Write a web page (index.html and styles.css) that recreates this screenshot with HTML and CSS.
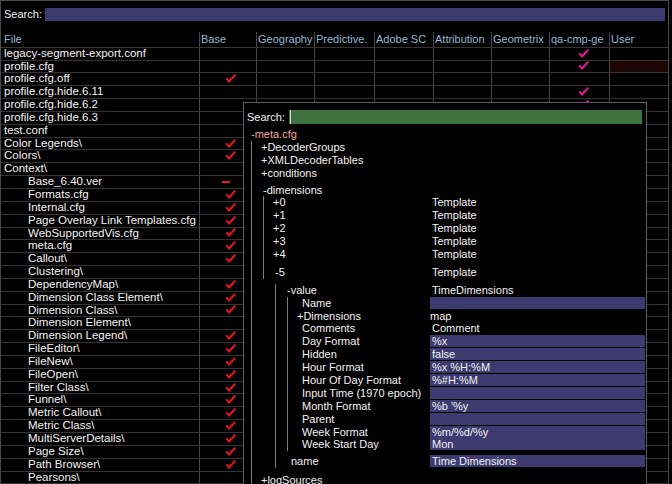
FILE: index.html
```html
<!DOCTYPE html>
<html>
<head>
<meta charset="utf-8">
<link rel="stylesheet" href="styles.css">
</head>
<body>
<svg class="defs" aria-hidden="true"><symbol id="ck" viewBox="0 0 11 9"><path d="M0.4 5.1 L2.1 3.8 L4 5.9 L9.6 0.1 L11 1.3 L4.2 8.9 Z"/></symbol></svg>
<div class="frame">
  <div class="search"><span class="lbl">Search:</span><div class="sbar"></div></div>
  <div class="table">
    <div class="row head"><div class="c f">File</div><div class="c">Base</div><div class="c">Geography</div><div class="c">Predictive.</div><div class="c">Adobe SC</div><div class="c">Attribution</div><div class="c">Geometrix</div><div class="c">qa-cmp-ge</div><div class="c">User</div></div>
    <div class="row"><div class="c f">legacy-segment-export.conf</div><div class="c b"></div><div class="c"></div><div class="c"></div><div class="c"></div><div class="c"></div><div class="c"></div><div class="c q"><svg class="ck mg"><use href="#ck"/></svg></div><div class="c"></div></div>
    <div class="row"><div class="c f">profile.cfg</div><div class="c b"></div><div class="c"></div><div class="c"></div><div class="c"></div><div class="c"></div><div class="c"></div><div class="c q"><svg class="ck mg"><use href="#ck"/></svg></div><div class="c dark"></div></div>
    <div class="row"><div class="c f">profile.cfg.off</div><div class="c b"><svg class="ck rd"><use href="#ck"/></svg></div><div class="c"></div><div class="c"></div><div class="c"></div><div class="c"></div><div class="c"></div><div class="c q"></div><div class="c"></div></div>
    <div class="row"><div class="c f">profile.cfg.hide.6.11</div><div class="c b"></div><div class="c"></div><div class="c"></div><div class="c"></div><div class="c"></div><div class="c"></div><div class="c q"><svg class="ck mg"><use href="#ck"/></svg></div><div class="c"></div></div>
    <div class="row"><div class="c f">profile.cfg.hide.6.2</div><div class="c b"></div><div class="c"></div><div class="c"></div><div class="c"></div><div class="c"></div><div class="c"></div><div class="c q"><svg class="ck mg"><use href="#ck"/></svg></div><div class="c"></div></div>
    <div class="row"><div class="c f">profile.cfg.hide.6.3</div><div class="c b"></div><div class="c"></div><div class="c"></div><div class="c"></div><div class="c"></div><div class="c"></div><div class="c q"></div><div class="c"></div></div>
    <div class="row"><div class="c f">test.conf</div><div class="c b"></div><div class="c"></div><div class="c"></div><div class="c"></div><div class="c"></div><div class="c"></div><div class="c q"></div><div class="c"></div></div>
    <div class="row"><div class="c f">Color Legends\</div><div class="c b"><svg class="ck rd"><use href="#ck"/></svg></div><div class="c"></div><div class="c"></div><div class="c"></div><div class="c"></div><div class="c"></div><div class="c q"></div><div class="c"></div></div>
    <div class="row"><div class="c f">Colors\</div><div class="c b"><svg class="ck rd"><use href="#ck"/></svg></div><div class="c"></div><div class="c"></div><div class="c"></div><div class="c"></div><div class="c"></div><div class="c q"></div><div class="c"></div></div>
    <div class="row"><div class="c f">Context\</div><div class="c b"></div><div class="c"></div><div class="c"></div><div class="c"></div><div class="c"></div><div class="c"></div><div class="c q"></div><div class="c"></div></div>
    <div class="row"><div class="c f in">Base_6.40.ver</div><div class="c b"><span class="dash"></span></div><div class="c"></div><div class="c"></div><div class="c"></div><div class="c"></div><div class="c"></div><div class="c q"></div><div class="c"></div></div>
    <div class="row"><div class="c f in">Formats.cfg</div><div class="c b"><svg class="ck rd"><use href="#ck"/></svg></div><div class="c"></div><div class="c"></div><div class="c"></div><div class="c"></div><div class="c"></div><div class="c q"></div><div class="c"></div></div>
    <div class="row"><div class="c f in">Internal.cfg</div><div class="c b"><svg class="ck rd"><use href="#ck"/></svg></div><div class="c"></div><div class="c"></div><div class="c"></div><div class="c"></div><div class="c"></div><div class="c q"></div><div class="c"></div></div>
    <div class="row"><div class="c f in">Page Overlay Link Templates.cfg</div><div class="c b"><svg class="ck rd"><use href="#ck"/></svg></div><div class="c"></div><div class="c"></div><div class="c"></div><div class="c"></div><div class="c"></div><div class="c q"></div><div class="c"></div></div>
    <div class="row"><div class="c f in">WebSupportedVis.cfg</div><div class="c b"><svg class="ck rd"><use href="#ck"/></svg></div><div class="c"></div><div class="c"></div><div class="c"></div><div class="c"></div><div class="c"></div><div class="c q"></div><div class="c"></div></div>
    <div class="row"><div class="c f in">meta.cfg</div><div class="c b"><svg class="ck rd"><use href="#ck"/></svg></div><div class="c"></div><div class="c"></div><div class="c"></div><div class="c"></div><div class="c"></div><div class="c q"></div><div class="c"></div></div>
    <div class="row"><div class="c f in">Callout\</div><div class="c b"><svg class="ck rd"><use href="#ck"/></svg></div><div class="c"></div><div class="c"></div><div class="c"></div><div class="c"></div><div class="c"></div><div class="c q"></div><div class="c"></div></div>
    <div class="row"><div class="c f in">Clustering\</div><div class="c b"></div><div class="c"></div><div class="c"></div><div class="c"></div><div class="c"></div><div class="c"></div><div class="c q"></div><div class="c"></div></div>
    <div class="row"><div class="c f in">DependencyMap\</div><div class="c b"><svg class="ck rd"><use href="#ck"/></svg></div><div class="c"></div><div class="c"></div><div class="c"></div><div class="c"></div><div class="c"></div><div class="c q"></div><div class="c"></div></div>
    <div class="row"><div class="c f in">Dimension Class Element\</div><div class="c b"><svg class="ck rd"><use href="#ck"/></svg></div><div class="c"></div><div class="c"></div><div class="c"></div><div class="c"></div><div class="c"></div><div class="c q"></div><div class="c"></div></div>
    <div class="row"><div class="c f in">Dimension Class\</div><div class="c b"><svg class="ck rd"><use href="#ck"/></svg></div><div class="c"></div><div class="c"></div><div class="c"></div><div class="c"></div><div class="c"></div><div class="c q"></div><div class="c"></div></div>
    <div class="row"><div class="c f in">Dimension Element\</div><div class="c b"></div><div class="c"></div><div class="c"></div><div class="c"></div><div class="c"></div><div class="c"></div><div class="c q"></div><div class="c"></div></div>
    <div class="row"><div class="c f in">Dimension Legend\</div><div class="c b"><svg class="ck rd"><use href="#ck"/></svg></div><div class="c"></div><div class="c"></div><div class="c"></div><div class="c"></div><div class="c"></div><div class="c q"></div><div class="c"></div></div>
    <div class="row"><div class="c f in">FileEditor\</div><div class="c b"><svg class="ck rd"><use href="#ck"/></svg></div><div class="c"></div><div class="c"></div><div class="c"></div><div class="c"></div><div class="c"></div><div class="c q"></div><div class="c"></div></div>
    <div class="row"><div class="c f in">FileNew\</div><div class="c b"><svg class="ck rd"><use href="#ck"/></svg></div><div class="c"></div><div class="c"></div><div class="c"></div><div class="c"></div><div class="c"></div><div class="c q"></div><div class="c"></div></div>
    <div class="row"><div class="c f in">FileOpen\</div><div class="c b"><svg class="ck rd"><use href="#ck"/></svg></div><div class="c"></div><div class="c"></div><div class="c"></div><div class="c"></div><div class="c"></div><div class="c q"></div><div class="c"></div></div>
    <div class="row"><div class="c f in">Filter Class\</div><div class="c b"><svg class="ck rd"><use href="#ck"/></svg></div><div class="c"></div><div class="c"></div><div class="c"></div><div class="c"></div><div class="c"></div><div class="c q"></div><div class="c"></div></div>
    <div class="row"><div class="c f in">Funnel\</div><div class="c b"><svg class="ck rd"><use href="#ck"/></svg></div><div class="c"></div><div class="c"></div><div class="c"></div><div class="c"></div><div class="c"></div><div class="c q"></div><div class="c"></div></div>
    <div class="row"><div class="c f in">Metric Callout\</div><div class="c b"><svg class="ck rd"><use href="#ck"/></svg></div><div class="c"></div><div class="c"></div><div class="c"></div><div class="c"></div><div class="c"></div><div class="c q"></div><div class="c"></div></div>
    <div class="row"><div class="c f in">Metric Class\</div><div class="c b"><svg class="ck rd"><use href="#ck"/></svg></div><div class="c"></div><div class="c"></div><div class="c"></div><div class="c"></div><div class="c"></div><div class="c q"></div><div class="c"></div></div>
    <div class="row"><div class="c f in">MultiServerDetails\</div><div class="c b"><svg class="ck rd"><use href="#ck"/></svg></div><div class="c"></div><div class="c"></div><div class="c"></div><div class="c"></div><div class="c"></div><div class="c q"></div><div class="c"></div></div>
    <div class="row"><div class="c f in">Page Size\</div><div class="c b"><svg class="ck rd"><use href="#ck"/></svg></div><div class="c"></div><div class="c"></div><div class="c"></div><div class="c"></div><div class="c"></div><div class="c q"></div><div class="c"></div></div>
    <div class="row"><div class="c f in">Path Browser\</div><div class="c b"><svg class="ck rd"><use href="#ck"/></svg></div><div class="c"></div><div class="c"></div><div class="c"></div><div class="c"></div><div class="c"></div><div class="c q"></div><div class="c"></div></div>
    <div class="row"><div class="c f in">Pearsons\</div><div class="c b"></div><div class="c"></div><div class="c"></div><div class="c"></div><div class="c"></div><div class="c"></div><div class="c q"></div><div class="c"></div></div>
  </div>

  <div class="panel">
    <div class="psearch"><span class="lbl">Search:</span><div class="gbar"><span class="caret"></span></div></div>
    <div class="tree">
      <div class="t top pink"><span class="lab">-meta.cfg</span></div>
      <div class="kids k1">
        <div class="t plus"><span class="lab">+DecoderGroups</span></div>
        <div class="t plus"><span class="lab">+XMLDecoderTables</span></div>
        <div class="t plus"><span class="lab">+conditions</span></div>
        <div class="t minus g4"><span class="lab">-dimensions</span></div>
        <div class="kids">
          <div class="t plus"><span class="lab">+0</span><span class="val">Template</span></div>
          <div class="t plus"><span class="lab">+1</span><span class="val">Template</span></div>
          <div class="t plus"><span class="lab">+2</span><span class="val">Template</span></div>
          <div class="t plus"><span class="lab">+3</span><span class="val">Template</span></div>
          <div class="t plus"><span class="lab">+4</span><span class="val">Template</span></div>
          <div class="t minus g5"><span class="lab">-5</span><span class="val">Template</span></div>
        </div>
        <div class="kids tail">
          <div class="t minus g5"><span class="lab">-value</span><span class="val">TimeDimensions</span></div>
          <div class="kids">
            <div class="t leaf"><span class="lab">Name</span><span class="val bar"></span></div>
            <div class="t plus"><span class="lab">+Dimensions</span><span class="val np">map</span></div>
            <div class="t leaf"><span class="lab">Comments</span><span class="val">Comment</span></div>
            <div class="t leaf"><span class="lab">Day Format</span><span class="val bar">%x</span></div>
            <div class="t leaf"><span class="lab">Hidden</span><span class="val bar">false</span></div>
            <div class="t leaf"><span class="lab">Hour Format</span><span class="val bar">%x %H:%M</span></div>
            <div class="t leaf"><span class="lab">Hour Of Day Format</span><span class="val bar">%#H:%M</span></div>
            <div class="t leaf"><span class="lab">Input Time (1970 epoch)</span><span class="val bar"></span></div>
            <div class="t leaf"><span class="lab">Month Format</span><span class="val bar">%b '%y</span></div>
            <div class="t leaf"><span class="lab">Parent</span><span class="val bar"></span></div>
            <div class="t leaf"><span class="lab">Week Format</span><span class="val bar">%m/%d/%y</span></div>
            <div class="t leaf"><span class="lab">Week Start Day</span><span class="val bar">Mon</span></div>
          </div>
          <div class="t leaf2 g4"><span class="lab">name</span><span class="val bar">Time Dimensions</span></div>
        </div>
        <div class="t plus g6"><span class="lab">+logSources</span></div>
      </div>
    </div>
  </div>
</div>
</body>
</html>
```

FILE: styles.css
```css
html, body {
  margin: 0;
  height: 100%;
  overflow: hidden;
  background: #000;
}

body {
  font-family: "Liberation Sans", Arial, sans-serif;
  color: #f2f2f2;
}

.defs {
  position: absolute;
  width: 0;
  height: 0;
  overflow: hidden;
}

.frame {
  position: relative;
  width: 669px;
  height: 100%;
  box-sizing: border-box;
  border: 1px solid #4a4a4a;
  border-bottom: none;
}

.search {
  display: flex;
  align-items: center;
  padding: 7px 3px 0 3px;
}

.lbl {
  font-size: 11px;
  line-height: 12px;
  margin-right: 3px;
  white-space: nowrap;
}

.sbar {
  flex: 1;
  height: 12.5px;
  background: #3c3a6e;
}

.table {
  margin-top: 11.5px;
}

.row {
  display: grid;
  grid-template-columns: 198px 57px 58px 60px 59px 58px 58px 60px 59px;
  height: 12.85px;
  box-sizing: border-box;
  border-bottom: 1px solid #343434;
}

.c {
  border-left: 1px solid #474747;
  overflow: hidden;
  white-space: nowrap;
  line-height: 11.85px;
  min-width: 0;
}

.c.f {
  border-left: none;
  padding-left: 3px;
  font-size: 11.5px;
}

.c.f.in {
  padding-left: 27px;
}

.head {
  height: 15.7px;
  color: #95b5d5;
}

.head .c {
  font-size: 11px;
  line-height: 15px;
  padding-left: 1px;
}

.head .c.f {
  padding-left: 3px;
}

.b, .q {
  display: flex;
  align-items: center;
}

.b {
  padding-left: 25px;
}

.q {
  padding-left: 28px;
}

.ck {
  width: 11px;
  height: 9px;
  margin-top: -1px;
}

.rd {
  fill: #ec1420;
}

.mg {
  fill: #e8189c;
}

.dash {
  width: 8px;
  height: 2.5px;
  margin-left: -3px;
  background: #ec1420;
}

.dark {
  background: #1f0606;
}

.panel {
  position: absolute;
  left: 242px;
  top: 101px;
  width: 404px;
  height: 400px;
  box-sizing: border-box;
  border: 1px solid #5c5c5c;
  background: #000;
  overflow: hidden;
}

.psearch {
  display: flex;
  align-items: center;
  padding: 7px 4px 0 3px;
}

.psearch .lbl {
  margin-right: 4px;
}

.gbar {
  flex: 1;
  height: 14px;
  display: flex;
  background: #3e723f;
}

.caret {
  width: 1px;
  margin-left: 1px;
  background: #d8d8d8;
}

.tree {
  margin-top: 4px;
  font-size: 11px;
}

.t {
  display: flex;
  height: 12.9px;
  line-height: 12.9px;
  white-space: nowrap;
}

.lab {
  flex: 1;
  min-width: 0;
  overflow: hidden;
}

.val {
  flex: none;
  width: 215px;
  margin-right: 1px;
  box-sizing: border-box;
  padding-left: 2px;
  overflow: hidden;
}

.val.np {
  padding-left: 0;
}

.bar {
  height: 12px;
  line-height: 12px;
  background: #3c3a6e;
}

.top {
  padding-left: 7px;
}

.pink {
  color: #f3a3a3;
}

.kids {
  margin-left: 11px;
  border-left: 1px solid #7c7c7c;
}

.kids.k1 {
  margin-left: 7px;
}

.kids.tail {
  margin-left: 23px;
}

.plus {
  padding-left: 9px;
}

.minus {
  padding-left: 11px;
}

.leaf {
  padding-left: 14px;
}

.leaf2 {
  padding-left: 15px;
}

.g4 {
  margin-top: 4px;
}

.g5 {
  margin-top: 5px;
}

.g6 {
  margin-top: 6px;
}
```
